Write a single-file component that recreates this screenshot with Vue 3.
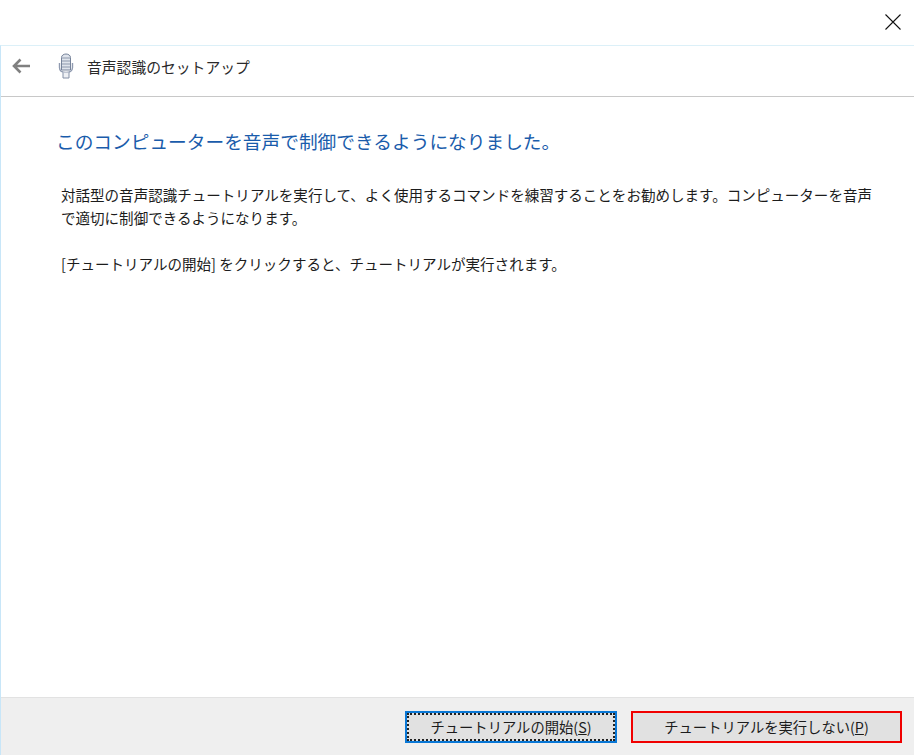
<template>
  <div class="window">
    <div class="titlebar">
      <svg class="close" width="16" height="16" viewBox="0 0 16 16">
        <path d="M0.5 0.5L15.5 15.5M15.5 0.5L0.5 15.5" stroke="#111" stroke-width="1.1" fill="none" />
      </svg>
    </div>
    <div class="frame">
      <header class="nav">
        <svg class="back" width="20" height="16" viewBox="0 0 20 16">
          <path d="M19 8H3M9.500 1.500L3 8l6.500 6.500" stroke="#808080" stroke-width="2.600" fill="none" />
        </svg>
        <svg class="mic" width="16" height="26" viewBox="0 0 16 26">
          <path d="M3.500 17V4.500C3.500 2.500 5.500 1 8 1s4.500 1.500 4.500 3.500V17z" fill="#dfe4ec" stroke="#76839a" />
          <path d="M4 5h8M4 8h8M4 11h8M4 14h8" stroke="#8d98ab" stroke-width="1.200" />
          <path d="M1.500 10v4.500c0 3 2.500 5 6.500 5s6.500-2 6.500-5V10" stroke="#8f9ab0" stroke-width="1.400" fill="none" />
          <path d="M5 19.500v5.500h6v-5.500" stroke="#8490a6" fill="#eef0f4" />
        </svg>
        <span class="nav-title">音声認識のセットアップ</span>
      </header>
      <main class="content">
        <h1>このコンピューターを音声で制御できるようになりました。</h1>
        <p class="intro">対話型の音声認識チュートリアルを実行して、よく使用するコマンドを練習することをお勧めします。コンピューターを音声で適切に制御できるようになります。</p>
        <p class="hint">[チュートリアルの開始] をクリックすると、チュートリアルが実行されます。</p>
      </main>
      <footer class="actions">
        <button class="btn primary"><span class="focus">チュートリアルの開始(<u>S</u>)</span></button>
        <button class="btn skip">チュートリアルを実行しない(<u>P</u>)</button>
      </footer>
    </div>
  </div>
</template>

<script setup>
</script>

<style>
html, body {
  margin: 0;
  background: #fff;
}
</style>

<style scoped>
.window {
  width: 914px;
  height: 755px;
  display: flex;
  flex-direction: column;
  overflow: hidden;
  background: #fff;
  color: #222;
  font-family: "Noto Sans CJK JP", "Liberation Sans", sans-serif;
}

.titlebar {
  height: 45px;
  flex-shrink: 0;
  display: flex;
  justify-content: flex-end;
  padding: 14px 13px 0 0;
  box-sizing: border-box;
}

.frame {
  flex: 1;
  display: flex;
  flex-direction: column;
  border-top: 1px solid #dcf0f8;
  border-left: 1px solid #c8e6f8;
  min-height: 0;
}

.nav {
  height: 40px;
  flex-shrink: 0;
  display: flex;
  align-items: center;
  border-bottom: 1px solid #c8c8c8;
  padding: 0 0 10px 10px;
}

.back {
  margin-right: 27px;
}

.mic {
  margin-right: 13px;
}

.nav-title {
  font-size: 14.8px;
  color: #2a2a2a;
}

.content {
  flex: 1;
  padding: 29px 40px 0 55px;
}

h1 {
  margin: 0 0 27px;
  font-size: 18.7px;
  font-weight: 400;
  line-height: 30px;
  color: #1a5cab;
  white-space: nowrap;
}

p {
  margin: 0;
  font-size: 14.54px;
  line-height: 23px;
  padding-left: 5px;
  color: #1c1c1c;
}

.intro {
  width: 815px;
  margin-bottom: 23px;
}

.actions {
  height: 58px;
  flex-shrink: 0;
  display: flex;
  justify-content: flex-end;
  align-items: center;
  gap: 14px;
  padding-right: 12px;
  background: #efefef;
  border-top: 1px solid #e2e2e2;
  box-sizing: border-box;
}

.btn {
  font-family: inherit;
  font-size: 14.3px;
  color: #1c1c1c;
  background: #e1e1e1;
  box-sizing: border-box;
  padding: 0;
  height: 32px;
  cursor: default;
}

.primary {
  width: 212px;
  border: 2px solid #0a78d6;
}

.focus {
  display: flex;
  align-items: center;
  justify-content: center;
  height: 100%;
  border: 2px dotted #222;
  box-sizing: border-box;
}

.skip {
  width: 271px;
  border: 2px solid #f00000;
}
</style>
